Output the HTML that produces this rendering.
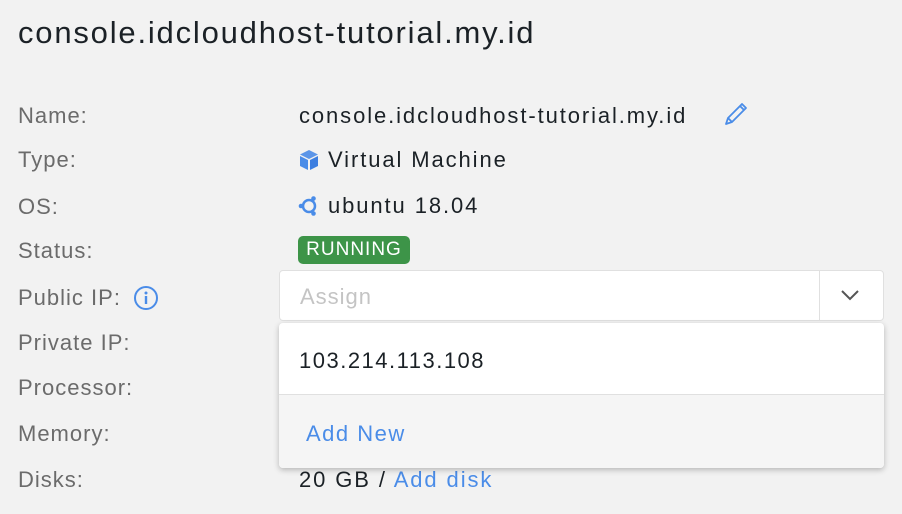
<!DOCTYPE html>
<html><head><style>
body{margin:0;width:902px;height:514px;background:#f2f2f2;font-family:"Liberation Sans",sans-serif;position:relative;overflow:hidden;color:#1b2126}
.t{position:absolute;left:18px;top:15px;font-size:31px;letter-spacing:1.8px;color:#1b2126}
.l{position:absolute;left:18px;font-size:22px;letter-spacing:1px;color:#6b6b6b;line-height:24px}
.v{position:absolute;left:299px;font-size:22px;letter-spacing:1.9px;color:#1b2126;line-height:24px}
.sel{position:absolute;left:279px;top:270px;width:605px;height:51px;background:#fff;border:1px solid #e0e0e0;border-radius:4px;box-sizing:border-box}
.dd{position:absolute;left:279px;top:323px;width:605px;height:145px;background:#fff;border-radius:4px;box-shadow:0 2px 6px rgba(0,0,0,.25);overflow:hidden}
</style></head><body>
<div class="t">console.idcloudhost-tutorial.my.id</div>
<div class="l" style="top:104px">Name:</div>
<div class="l" style="top:148px">Type:</div>
<div class="l" style="top:195px">OS:</div>
<div class="l" style="top:239px">Status:</div>
<div class="l" style="top:286px">Public IP:</div>
<svg style="position:absolute;left:133px;top:285px" width="26" height="26" viewBox="0 0 26 26"><circle cx="13" cy="13" r="11" fill="none" stroke="#4a8ce8" stroke-width="2"/><circle cx="13" cy="8" r="1.5" fill="#4a8ce8"/><rect x="11.8" y="11" width="2.4" height="8" fill="#4a8ce8"/></svg>
<div class="l" style="top:331px">Private IP:</div>
<div class="l" style="top:376px">Processor:</div>
<div class="l" style="top:422px">Memory:</div>
<div class="l" style="top:468px">Disks:</div>
<div class="v" style="top:104px">console.idcloudhost-tutorial.my.id</div>
<svg style="position:absolute;left:722px;top:100px" width="28" height="28" viewBox="0 0 28 28"><path d="M4 24 L6 18 L20 4 L24 8 L10 22 Z M6 18 L10 22 M18 6 L22 10" fill="none" stroke="#4a8ce8" stroke-width="1.8" stroke-linejoin="round"/></svg>
<svg style="position:absolute;left:298px;top:149px" width="22" height="22" viewBox="0 0 22 22"><path d="M11 1 L20 5.5 L11 10 L2 5.5Z" fill="#5b95e8"/><path d="M2 7 L10 11 V21 L2 17Z" fill="#4a8ce8"/><path d="M20 7 L12 11 V21 L20 17Z" fill="#3d7fe0"/></svg>
<div class="v" style="top:148px;left:328px">Virtual Machine</div>
<svg style="position:absolute;left:298px;top:195px" width="22" height="22" viewBox="0 0 22 22"><circle cx="11" cy="11" r="6" fill="none" stroke="#4a8ce8" stroke-width="2.5"/><circle cx="3" cy="11" r="2.3" fill="#4a8ce8"/><circle cx="15.5" cy="3.5" r="2.3" fill="#4a8ce8"/><circle cx="15.5" cy="18.5" r="2.3" fill="#4a8ce8"/></svg>
<div class="v" style="top:194px;left:328px">ubuntu 18.04</div>
<div style="position:absolute;left:298px;top:236px;width:112px;height:28px;background:#3d9448;border-radius:5px;color:#fff;font-size:19px;letter-spacing:1px;line-height:28px;text-align:center">RUNNING</div>
<div class="sel"><span style="position:absolute;left:20px;top:13px;font-size:22px;letter-spacing:1px;color:#c4c4c4">Assign</span><div style="position:absolute;left:539px;top:0;width:1px;height:49px;background:#e0e0e0"></div><svg style="position:absolute;left:560px;top:16px" width="20" height="16" viewBox="0 0 20 16"><path d="M2 4 L10 12 L18 4" fill="none" stroke="#555" stroke-width="2"/></svg></div>
<div class="v" style="top:468px">20 GB / <span style="color:#4a8ce8">Add disk</span></div>
<div class="dd"><div style="position:absolute;left:20px;top:25px;font-size:22px;letter-spacing:1.5px;color:#1b2126">103.214.113.108</div><div style="position:absolute;left:0;top:71px;width:100%;height:74px;background:#f5f5f5;border-top:1px solid #e0e0e0"><span style="position:absolute;left:27px;top:26px;font-size:22px;letter-spacing:1.5px;color:#4a8ce8">Add New</span></div></div>
</body></html>
